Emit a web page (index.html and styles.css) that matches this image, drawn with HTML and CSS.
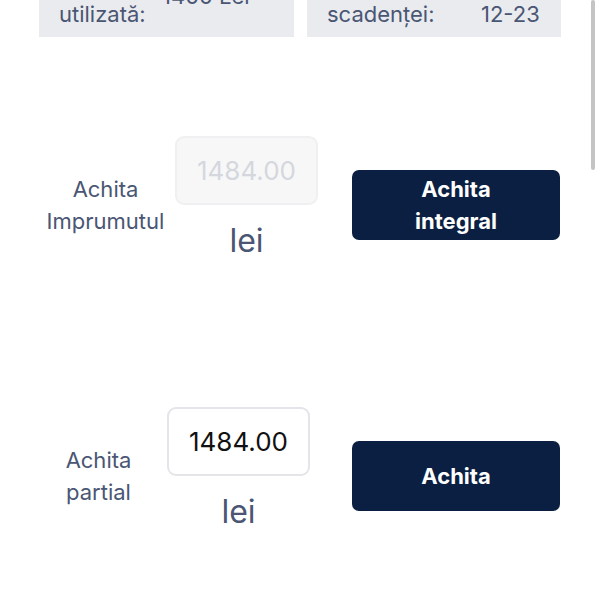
FILE: index.html
```html
<!DOCTYPE html>
<html lang="ro">
<head>
<meta charset="utf-8">
<title>Achitare imprumut</title>
<link rel="stylesheet" href="styles.css">
</head>
<body>
<div class="viewport">
  <main class="content">
    <section class="stats">
      <div class="stat stat--used">
        <div class="stat-label">Suma<br>utilizată:</div>
        <div class="stat-value stat-value--raised">1400 Lei</div>
      </div>
      <div class="stat stat--due">
        <div class="stat-label">Data<br>scadenței:</div>
        <div class="stat-value">2024-<br>12-23</div>
      </div>
    </section>

    <section class="pay-list">
      <div class="pay-row pay-row--full">
        <div class="pay-label">Achita<br>Imprumutul</div>
        <div class="amount">
          <input class="amount-input amount-input--disabled" type="text" placeholder="1484.00" disabled>
          <span class="amount-unit">lei</span>
        </div>
        <button class="pay-btn" type="button">Achita integral</button>
      </div>

      <div class="pay-row pay-row--partial">
        <div class="pay-label">Achita<br>partial</div>
        <div class="amount">
          <input class="amount-input" type="text" value="1484.00">
          <span class="amount-unit">lei</span>
        </div>
        <button class="pay-btn" type="button">Achita</button>
      </div>
    </section>
  </main>
  <div class="scroll-thumb"></div>
</div>
</body>
</html>
```

FILE: styles.css
```css
* { box-sizing: border-box; }

html, body {
  margin: 0;
  padding: 0;
  background: #ffffff;
}

body {
  font-family: Inter, "Noto Sans", "Liberation Sans", sans-serif;
  color: #4a5673;
}

.viewport {
  position: relative;
  width: 600px;
  height: 600px;
  overflow: hidden;
}

.content {
  margin-top: -28px;
  padding: 0 40px 0 39px;
}

/* top stats cards */
.stats {
  display: grid;
  grid-template-columns: 255px 254px;
  column-gap: 13px;
}

.stat {
  display: grid;
  align-items: center;
  background: #e9ebef;
  padding: 0 20px 9px 20px;
  font-size: 22px;
  line-height: 28px;
}

.stat--used { grid-template-columns: 103px auto; }
.stat--due { grid-template-columns: 154px auto; }

.stat-value--raised { margin-bottom: 8px; }

/* payment rows */
.pay-list {
  display: flex;
  flex-direction: column;
  gap: 133px;
  padding-top: 99px;
}

.pay-row {
  display: flex;
  align-items: center;
}

.pay-label {
  flex: none;
  text-align: center;
  font-size: 22px;
  line-height: 32px;
}

.pay-row--full .pay-label { width: 136px; padding-right: 3px; }
.pay-row--partial .pay-label { width: 128px; padding-right: 9px; }

.amount {
  display: flex;
  flex-direction: column;
  align-items: center;
  flex: none;
}

.amount-input {
  width: 143px;
  height: 69px;
  border: 2px solid #e4e5e9;
  border-radius: 9px;
  background: #ffffff;
  font-family: inherit;
  font-size: 26px;
  color: #111111;
  text-align: center;
  padding: 0;
  outline: none;
}

.amount-input--disabled {
  background: #f7f7f8;
  border-color: #f0f0f2;
}

.amount-input--disabled::placeholder {
  color: #d4d7dd;
  opacity: 1;
}

.amount-unit {
  font-size: 32px;
  line-height: 40px;
  margin: 16px 0 13px;
  color: #4a5673;
}

.pay-btn {
  margin-left: auto;
  width: 208px;
  height: 70px;
  padding: 0 45px;
  border: none;
  border-radius: 7px;
  background: #0b1f42;
  color: #ffffff;
  font-family: inherit;
  font-size: 22px;
  font-weight: 700;
  line-height: 32px;
  text-align: center;
  cursor: pointer;
}

.scroll-thumb {
  position: absolute;
  top: 0;
  right: 5px;
  width: 4px;
  height: 170px;
  border-radius: 2px;
  background: #c4c4c4;
}
```
